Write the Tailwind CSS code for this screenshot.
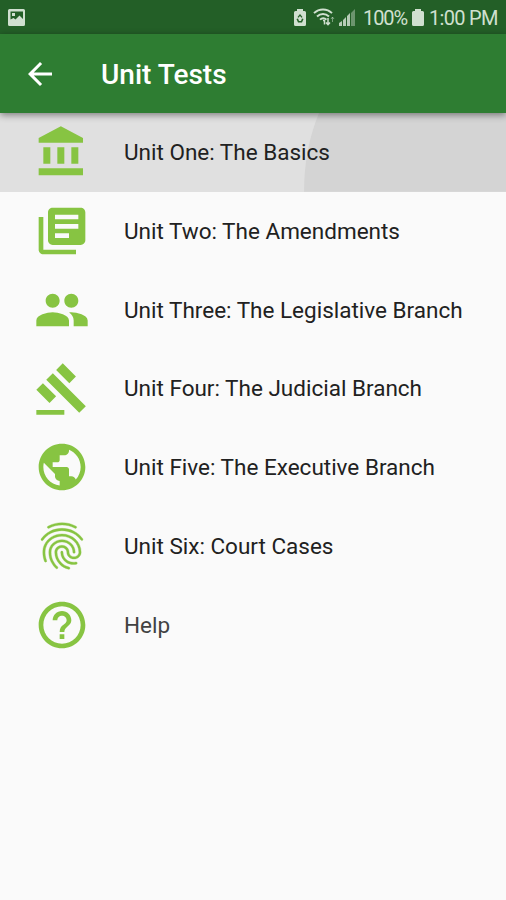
<!DOCTYPE html>
<html lang="en">
<head>
    <meta charset="UTF-8">
    <meta name="viewport" content="width=device-width, initial-scale=1.0">
    <title>Unit Tests</title>
    <script src="https://cdn.jsdelivr.net/npm/@tailwindcss/browser@4"></script>
</head>
<body class="bg-[#fafafa] h-screen overflow-hidden font-['Roboto',sans-serif] text-[#212121]">

    <!-- Status Bar -->
    <div class="h-[34px] bg-[#235f27] flex items-center pl-2 pr-[9px] text-[#d0e0d0]">
        <svg class="size-[17px]" viewBox="0 0 17 17" fill="currentColor">
            <path fill-rule="evenodd" d="M1.500 0h14a1.500 1.500 0 0 1 1.500 1.500v14a1.500 1.500 0 0 1-1.500 1.500h-14a1.500 1.500 0 0 1-1.500-1.500v-14a1.500 1.500 0 0 1 1.500-1.500zM2.500 2.500v8l3-1.500 2 1.500 4-4 3.500 3.500v-7.500zM4 4h3v3H4z"/>
        </svg>
        <div class="ml-auto flex items-center">
            <svg class="w-[12px] h-[17px]" viewBox="0 0 12 17" fill="currentColor">
                <path fill-rule="evenodd" d="M3 0h6v2h1.500A1.500 1.500 0 0 1 12 3.500v12a1.500 1.500 0 0 1-1.500 1.500h-9A1.500 1.500 0 0 1 0 15.500v-12A1.500 1.500 0 0 1 1.500 2H3zM6 5L3.500 8l1 .8L6 7l1.500 1.800 1-.8zM2.500 10l1.500 3.500h4L9.500 10 8 9.500 7 12H5L4 9.500z"/>
            </svg>
            <svg class="w-[22px] h-[18px] ml-[7px]" viewBox="0 0 22 18" fill="none" stroke="currentColor" stroke-width="1.900">
                <path d="M1 5.200C6 .2 14 .2 19 5.200M4 8.500c3.500-3.400 8.500-3.400 12 0M7 11.700c2-2 4.500-2 6.500 0"/>
                <path d="M10 12.500h1.500v4M13 14.500l2 2.200 2-2.200M15 10v6" stroke-width="1.500"/>
                <path d="M18 11l1.500-2 1.500 2M19.500 9v5" stroke-width="1" opacity=".5"/>
            </svg>
            <svg class="w-[17px] h-[17px] ml-[4px]" viewBox="0 0 17 17" fill="currentColor" opacity=".85">
                <path d="M0 17v-3l3-2v5zM4 17v-6l3-3v9zM8 17V7l3-3v13z"/>
                <path d="M12 17V4l4-4v17z" opacity=".5"/>
            </svg>
            <span class="ml-[7px] pt-[2px] w-[44px] text-[20px] leading-none whitespace-nowrap tracking-[-1.1px]">100%</span>
            <svg class="w-[12px] h-[17px] ml-[5px]" viewBox="0 0 12 17" fill="currentColor">
                <path d="M3 0h6v2h1.500A1.500 1.500 0 0 1 12 3.500v12a1.500 1.500 0 0 1-1.500 1.500h-9A1.500 1.500 0 0 1 0 15.500v-12A1.500 1.500 0 0 1 1.500 2H3z"/>
            </svg>
            <span class="ml-[5px] pt-[2px] w-[68px] text-[20px] leading-none whitespace-nowrap tracking-[-0.7px]">1:00 PM</span>
        </div>
    </div>

    <!-- App Bar -->
    <header class="relative z-10 h-[79px] bg-[#2e7d32] flex items-center pl-[22px] text-white shadow-[0_2px_7px_rgba(0,0,0,0.45)]">
        <svg class="size-9" viewBox="0 0 24 24" fill="currentColor">
            <path d="M20 11H7.830l5.590-5.590L12 4l-8 8 8 8 1.410-1.410L7.830 13H20v-2z"/>
        </svg>
        <h1 class="ml-[43px] pt-[3px] text-[28px] font-medium leading-none">Unit Tests</h1>
    </header>

    <!-- Unit List -->
    <ul class="text-[22.500px] leading-none">
        <!-- Pressed row, with the ripple spreading from the right -->
        <li class="relative h-[78.750px] flex items-center pl-[34px] bg-[#e0e0e0]">
            <svg class="absolute inset-0 w-full h-full" viewBox="0 0 506 79" preserveAspectRatio="none" fill="#d4d4d4">
                <path d="M319 0Q304 36 304 79H506V0z"/>
            </svg>
            <svg class="relative size-14 text-[#87c442]" viewBox="0 0 24 24" fill="currentColor">
                <path d="M4 10v7h3v-7H4zm6 0v7h3v-7h-3zM2 22h19v-3H2v3zm14-12v7h3v-7h-3zm-4.500-9L2 6v2h19V6l-9.500-5z"/>
            </svg>
            <span class="relative ml-[34px]">Unit One: The Basics</span>
        </li>
        <li class="h-[78.750px] flex items-center pl-[34px]">
            <svg class="size-14 text-[#87c442]" viewBox="0 0 24 24" fill="currentColor">
                <path d="M4 6H2v14c0 1.100.9 2 2 2h14v-2H4V6zm16-4H8c-1.100 0-2 .9-2 2v12c0 1.100.9 2 2 2h12c1.100 0 2-.9 2-2V4c0-1.100-.9-2-2-2zm-1 9H9V9h10v2zm-4 4H9v-2h6v2zm4-8H9V5h10v2z"/>
            </svg>
            <span class="ml-[34px]">Unit Two: The Amendments</span>
        </li>
        <li class="h-[78.750px] flex items-center pl-[34px]">
            <svg class="size-14 text-[#87c442]" viewBox="0 0 24 24" fill="currentColor">
                <path d="M16 11c1.660 0 2.990-1.340 2.990-3S17.660 5 16 5c-1.660 0-3 1.340-3 3s1.340 3 3 3zm-8 0c1.660 0 2.990-1.340 2.990-3S9.660 5 8 5C6.340 5 5 6.340 5 8s1.340 3 3 3zm0 2c-2.330 0-7 1.170-7 3.500V19h14v-2.500c0-2.330-4.670-3.500-7-3.500zm8 0c-.29 0-.62.02-.97.05 1.160.84 1.970 1.970 1.970 3.450V19h6v-2.500c0-2.330-4.670-3.500-7-3.500z"/>
            </svg>
            <span class="ml-[34px]">Unit Three: The Legislative Branch</span>
        </li>
        <li class="h-[78.750px] flex items-center pl-[34px]">
            <svg class="size-14 text-[#87c442]" viewBox="0 0 24 24" fill="currentColor">
                <path d="M1 21h12v2H1zM5.245 8.070l2.830-2.827 14.140 14.142-2.828 2.828zM12.317 1l5.657 5.656-2.830 2.830-5.654-5.660zM3.825 9.485l5.657 5.657-2.828 2.828-5.657-5.657z"/>
            </svg>
            <span class="ml-[34px]">Unit Four: The Judicial Branch</span>
        </li>
        <li class="h-[78.750px] flex items-center pl-[34px]">
            <svg class="size-14 text-[#87c442]" viewBox="0 0 24 24" fill="currentColor">
                <path d="M12 2C6.480 2 2 6.480 2 12s4.480 10 10 10 10-4.480 10-10S17.520 2 12 2zm-1 17.930c-3.950-.49-7-3.850-7-7.930 0-.62.08-1.210.21-1.790L9 15v1c0 1.100.9 2 2 2v1.930zm6.900-2.540c-.26-.81-1-1.390-1.900-1.390h-1v-3c0-.55-.45-1-1-1H8v-2h2c.55 0 1-.45 1-1V7h2c1.100 0 2-.9 2-2v-.41c2.930 1.190 5 4.060 5 7.410 0 2.080-.8 3.970-2.100 5.390z"/>
            </svg>
            <span class="ml-[34px]">Unit Five: The Executive Branch</span>
        </li>
        <li class="h-[78.750px] flex items-center pl-[34px]">
            <svg class="size-14 text-[#87c442]" viewBox="0 0 24 24" fill="currentColor" stroke="currentColor" stroke-width=".15">
                <path d="M17.810 4.470c-.08 0-.16-.02-.23-.06C15.660 3.420 14 3 12.010 3c-1.980 0-3.860.47-5.570 1.410-.24.13-.54.04-.68-.2-.13-.24-.04-.55.2-.68C7.820 2.520 9.860 2 12.010 2c2.130 0 3.990.47 6.030 1.520.25.13.34.43.21.67-.09.18-.26.28-.44.28zM3.500 9.720c-.1 0-.2-.03-.29-.09-.23-.16-.28-.47-.12-.7.99-1.400 2.250-2.500 3.750-3.270C9.980 4.040 14 4.030 17.150 5.650c1.500.77 2.760 1.860 3.750 3.250.16.22.11.54-.12.7-.23.16-.54.11-.7-.12-.9-1.260-2.040-2.250-3.390-2.940-2.870-1.470-6.540-1.470-9.400.01-1.360.7-2.500 1.700-3.400 2.960-.08.14-.23.21-.39.21zm6.250 12.070c-.13 0-.26-.05-.35-.15-.87-.87-1.340-1.430-2.010-2.640-.69-1.230-1.050-2.730-1.050-4.340 0-2.970 2.540-5.390 5.660-5.390s5.660 2.420 5.660 5.390c0 .28-.22.5-.5.5s-.5-.22-.5-.5c0-2.420-2.090-4.390-4.660-4.390-2.570 0-4.660 1.970-4.660 4.390 0 1.440.32 2.770.93 3.850.64 1.150 1.080 1.640 1.850 2.420.19.2.19.51 0 .71-.11.1-.24.15-.37.15zm7.170-1.850c-1.190 0-2.240-.3-3.100-.89-1.490-1.010-2.380-2.650-2.380-4.390 0-.28.22-.5.5-.5s.5.22.5.5c0 1.410.72 2.740 1.940 3.560.71.48 1.540.71 2.540.71.24 0 .64-.03 1.040-.1.27-.05.53.13.58.41.05.27-.13.53-.41.58-.57.11-1.070.12-1.210.12zM14.910 22c-.04 0-.09-.01-.13-.02-1.590-.44-2.630-1.030-3.720-2.100-1.400-1.390-2.170-3.240-2.170-5.220 0-1.620 1.380-2.940 3.080-2.940 1.700 0 3.080 1.320 3.080 2.940 0 1.070.93 1.940 2.080 1.940s2.080-.87 2.080-1.940c0-3.770-3.250-6.830-7.250-6.830-2.840 0-5.440 1.580-6.610 4.030-.39.81-.59 1.760-.59 2.800 0 .78.07 2.010.67 3.610.1.26-.03.55-.29.64-.26.1-.55-.04-.64-.29-.49-1.310-.73-2.610-.73-3.960 0-1.200.23-2.290.68-3.240 1.330-2.790 4.280-4.600 7.510-4.600 4.550 0 8.250 3.510 8.250 7.830 0 1.620-1.380 2.940-3.080 2.940s-3.080-1.320-3.080-2.940c0-1.070-.93-1.940-2.080-1.940s-2.080.87-2.080 1.940c0 1.710.66 3.310 1.870 4.510.95.94 1.860 1.460 3.270 1.850.27.07.42.35.35.61-.05.23-.26.38-.47.38z"/>
            </svg>
            <span class="ml-[34px]">Unit Six: Court Cases</span>
        </li>
        <li class="h-[78.750px] flex items-center pl-[34px]">
            <svg class="size-14 text-[#87c442]" viewBox="0 0 24 24" fill="currentColor">
                <path d="M11 18h2v-2h-2v2zm1-16C6.480 2 2 6.480 2 12s4.480 10 10 10 10-4.480 10-10S17.520 2 12 2zm0 18c-4.410 0-8-3.590-8-8s3.590-8 8-8 8 3.590 8 8-3.590 8-8 8zm0-14c-2.210 0-4 1.790-4 4h2c0-1.100.9-2 2-2s2 .9 2 2c0 2-3 1.750-3 5h2c0-2.250 3-2.500 3-5 0-2.210-1.790-4-4-4z"/>
            </svg>
            <span class="ml-[34px] text-[#424242]">Help</span>
        </li>
    </ul>

</body>
</html>
